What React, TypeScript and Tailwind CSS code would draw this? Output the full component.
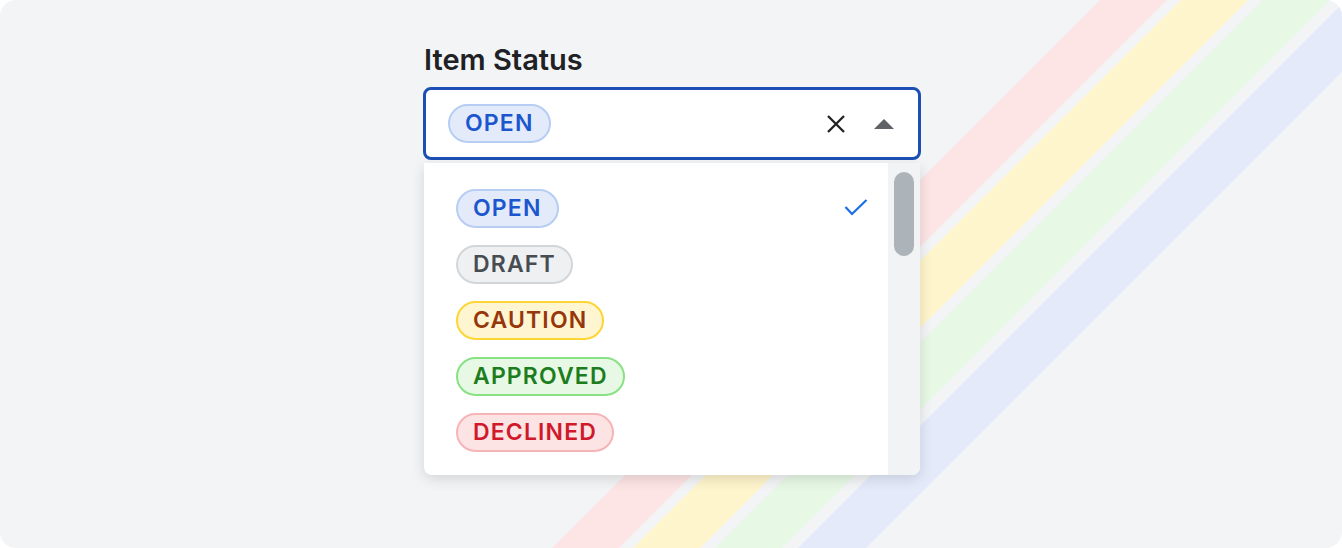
import { useState } from 'react'

type Status = {
  label: string
  chip: string
}

const statuses: Status[] = [
  { label: 'OPEN', chip: 'bg-[#e3ebfb] border-[#b7cdf4] text-[#1b56cf]' },
  { label: 'DRAFT', chip: 'bg-[#eef0f2] border-[#d3d6d9] text-[#464c51]' },
  { label: 'CAUTION', chip: 'bg-[#fff6d1] border-[#fdd535] text-[#97360b]' },
  { label: 'APPROVED', chip: 'bg-[#e7f9e5] border-[#88e183] text-[#1d7d1e]' },
  { label: 'DECLINED', chip: 'bg-[#fce4e5] border-[#f6b4b7] text-[#d0192b]' },
]

function Chip({ status }: { status: Status }) {
  return (
    <span
      className={`inline-flex h-[39px] items-center rounded-full border-2 px-[15px] text-[23px] font-semibold tracking-[0.05em] ${status.chip}`}
    >
      {status.label}
    </span>
  )
}

function Stripes() {
  // diagonal background bands, x + y between a and b
  const bands = [
    { a: 1100, b: 1167, fill: '#fde4e5' },
    { a: 1181, b: 1248, fill: '#fef5cc' },
    { a: 1263, b: 1330, fill: '#e7f8e5' },
    { a: 1346, b: 1414, fill: '#e4eafa' },
  ]
  return (
    <svg className="absolute inset-0" width="1342" height="548" viewBox="0 0 1342 548">
      {bands.map((band) => (
        <polygon
          key={band.a}
          points={`${band.a},0 ${band.b},0 ${band.b - 548},548 ${band.a - 548},548`}
          fill={band.fill}
        />
      ))}
    </svg>
  )
}

export default function App() {
  const [selected] = useState('OPEN')
  const current = statuses.find((s) => s.label === selected)!

  return (
    <div className="h-[548px] w-[1342px] bg-white font-['Inter',sans-serif]">
      <div className="relative h-full w-full overflow-hidden rounded-2xl bg-[#f3f4f6]">
        <Stripes />
        <div className="relative flex flex-col pl-[423px] pt-[43px]">
          <label className="block pl-[1px] text-[29px] font-semibold leading-[34px] text-[#202124]">
            Item Status
          </label>

          <div className="mt-[10px] flex h-[73px] w-[498px] items-center rounded-[8px] border-[3px] border-[#1b4fb4] bg-white pl-[22px] pr-[24px]">
            <Chip status={current} />
            <div className="ml-auto flex items-center gap-[28px]">
              <svg width="20" height="20" viewBox="0 0 20 20">
                <path d="M2 2L18 18M18 2L2 18" stroke="#222" strokeWidth="2.3" fill="none" />
              </svg>
              <svg width="20" height="10" viewBox="0 0 20 10">
                <path d="M10 0L20 10H0Z" fill="#5f6368" />
              </svg>
            </div>
          </div>

          <div className="ml-[1px] mt-[3px] flex h-[312px] w-[496px] overflow-hidden rounded-b-[8px] bg-white shadow-[0_4px_14px_rgba(0,0,0,0.13)]">
            <ul className="flex flex-1 flex-col pl-[32px] pr-[20px] pt-[17px]">
              {statuses.map((status) => (
                <li key={status.label} className="flex h-[56px] items-center">
                  <Chip status={status} />
                  {status.label === selected && (
                    <svg className="ml-auto" width="24" height="20" viewBox="0 0 24 20">
                      <path d="M1.5 9L8 16L22.5 2" stroke="#1a6ee8" strokeWidth="2.2" fill="none" />
                    </svg>
                  )}
                </li>
              ))}
            </ul>
            <div className="w-[32px] bg-[#f2f3f5] pl-[6px] pt-[9px]">
              <div className="h-[84px] w-[20px] rounded-full bg-[#adb4b9]" />
            </div>
          </div>
        </div>
      </div>
    </div>
  )
}
